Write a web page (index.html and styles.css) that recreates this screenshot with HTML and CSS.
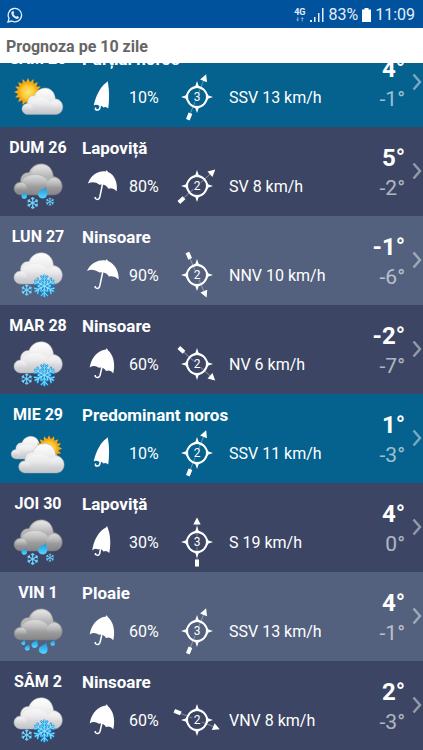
FILE: index.html
```html
<!DOCTYPE html>
<html lang="ro">
<head>
    <meta charset="UTF-8">
    <meta name="viewport" content="width=device-width, initial-scale=1.0">
    <title>Prognoza pe 10 zile</title>
    <link rel="stylesheet" href="styles.css">
</head>
<body>
    <!-- Simboluri folosite in lista -->
    <svg class="simboluri" width="0" height="0" aria-hidden="true">
        <defs>
            <linearGradient id="gri" x1="0" y1="0" x2="0" y2="1">
                <stop offset="0" stop-color="#cfcfcf"/>
                <stop offset="0.6" stop-color="#aaaaab"/>
                <stop offset="1" stop-color="#858587"/>
            </linearGradient>
            <linearGradient id="alb" x1="0" y1="0" x2="0" y2="1">
                <stop offset="0" stop-color="#fbfbfb"/>
                <stop offset="0.6" stop-color="#e6e6e8"/>
                <stop offset="1" stop-color="#c2c3c8"/>
            </linearGradient>
            <linearGradient id="lumina" x1="0" y1="0" x2="0" y2="1">
                <stop offset="0" stop-color="#fff" stop-opacity="0.5"/>
                <stop offset="0.7" stop-color="#fff" stop-opacity="0"/>
            </linearGradient>
            <radialGradient id="galben">
                <stop offset="0" stop-color="#ffe67a"/>
                <stop offset="0.7" stop-color="#fdc52c"/>
                <stop offset="1" stop-color="#f0a010"/>
            </radialGradient>
            <linearGradient id="apa" x1="0" y1="0" x2="0" y2="1">
                <stop offset="0" stop-color="#1596dc"/>
                <stop offset="1" stop-color="#5ad6ff"/>
            </linearGradient>

            <path id="contur" d="M15 34C11 34 8 31 8 27.500C8 24 10.500 21 14.500 21C14 15 18 11 23 11.500C25 6 30 2.700 35.500 2.700C42 2.700 47 8 47.500 15.500C52.500 16 56.300 20 56.300 25C56.300 30.500 52.500 34 48 34Z"/>
            <g id="reflexii" fill="url(#lumina)">
                <ellipse cx="29" cy="22" rx="13" ry="8"/>
                <ellipse cx="35.500" cy="12" rx="10" ry="8"/>
                <ellipse cx="15" cy="27" rx="6" ry="5"/>
                <ellipse cx="48" cy="24" rx="7" ry="7"/>
            </g>
            <g id="nor-gri"><use href="#contur" fill="url(#gri)" stroke="#77777b" stroke-width="0.500"/><use href="#reflexii"/></g>
            <g id="nor-alb"><use href="#contur" fill="url(#alb)" stroke="#aeb0b6" stroke-width="0.500"/><use href="#reflexii"/></g>

            <g id="soare">
                <path fill="#f7a913" d="M0-14L2-9.800L5.400-12.900L5.600-8.300L9.900-9.900L8.300-5.600L12.900-5.400L9.800-2L14 0L9.800 2L12.900 5.400L8.300 5.600L9.900 9.900L5.600 8.300L5.400 12.900L2 9.800L0 14L-2 9.800L-5.400 12.900L-5.600 8.300L-9.900 9.900L-8.300 5.600L-12.900 5.400L-9.800 2L-14 0L-9.800-2L-12.900-5.400L-8.300-5.600L-9.900-9.900L-5.600-8.300L-5.400-12.900L-2-9.800Z"/>
                <circle r="9.800" fill="url(#galben)"/>
            </g>
            <path id="picatura" fill="url(#apa)" d="M3-6C4-2 5 0 4.300 2.500C3.500 5.500-0.500 6.500-3 4.500C-5.500 2.500-5 -1-2.500-2.500C-0.500-3.600 1.500-4.200 3-6Z"/>
            <g id="brat">
                <path d="M0 0V-10.500M-3-9.500L0-6.500L3-9.500M-2.500-5.500L0-3L2.500-5.500"/>
            </g>
            <g id="brat-simplu">
                <path d="M0 0V-10.500M-3-9L0-6L3-9"/>
            </g>
            <g id="fulg" fill="none" stroke-linecap="round">
                <use href="#brat"/>
                <use href="#brat" transform="rotate(60)"/>
                <use href="#brat" transform="rotate(120)"/>
                <use href="#brat" transform="rotate(180)"/>
                <use href="#brat" transform="rotate(240)"/>
                <use href="#brat" transform="rotate(300)"/>
            </g>
            <g id="fulg-mare">
                <use href="#fulg" stroke="#1497dc" stroke-width="2.200"/>
                <use href="#fulg" stroke="#8ddeff" stroke-width="1"/>
            </g>
            <g id="fulg-mic" fill="none" stroke="#6fd3ff" stroke-width="2">
                <use href="#brat-simplu"/>
                <use href="#brat-simplu" transform="rotate(60)"/>
                <use href="#brat-simplu" transform="rotate(120)"/>
                <use href="#brat-simplu" transform="rotate(180)"/>
                <use href="#brat-simplu" transform="rotate(240)"/>
                <use href="#brat-simplu" transform="rotate(300)"/>
            </g>
        </defs>

        <!-- Starea vremii -->
        <symbol id="partial-noros" viewBox="0 0 64 50">
            <use href="#soare" transform="translate(22 20)"/>
            <use href="#nor-alb" transform="translate(9.200 13.700) scale(0.845)"/>
        </symbol>
        <symbol id="predominant-noros" viewBox="0 0 64 50">
            <use href="#nor-alb" transform="translate(-0.600 6.400) scale(0.720)"/>
            <use href="#soare" transform="translate(43 20.500) scale(0.940)"/>
            <use href="#nor-alb" transform="translate(5.200 13) scale(0.940)"/>
        </symbol>
        <symbol id="ninsoare" viewBox="0 0 64 50">
            <use href="#nor-alb"/>
            <use href="#fulg-mic" transform="translate(20.700 40) scale(0.540)"/>
            <use href="#fulg-mare" transform="translate(38.300 36)"/>
        </symbol>
        <symbol id="lapovita" viewBox="0 0 64 50">
            <use href="#nor-gri"/>
            <use href="#picatura" transform="translate(18.300 34.500) scale(0.600)"/>
            <use href="#picatura" transform="translate(36.700 32)"/>
            <use href="#fulg-mic" transform="translate(26.700 42) scale(0.560)"/>
            <use href="#fulg-mic" transform="translate(44 40.700) scale(0.400)"/>
        </symbol>
        <symbol id="ploaie" viewBox="0 0 64 50">
            <use href="#nor-gri"/>
            <use href="#picatura" transform="translate(17.300 36.500) scale(0.450)"/>
            <use href="#picatura" transform="translate(21.300 41.500) scale(0.550)"/>
            <use href="#picatura" transform="translate(28.700 38) scale(0.700)"/>
            <use href="#picatura" transform="translate(37.300 42.500) scale(0.950)"/>
            <use href="#picatura" transform="translate(46.700 37) scale(0.500)"/>
        </symbol>

        <!-- Umbrela, tot mai deschisa -->
        <symbol id="umbrela-10" viewBox="0 0 40 40">
            <path d="M11.700 28.500C14 18 19 9 24.500 5.500L25.300 4L26 6C27.500 14 27.300 23 26.300 31.500Q24 29 21.500 30.500Q19.500 28 17.500 29Q14 27 11.700 28.500Z"/>
            <path class="maner" d="M18.500 28L17.700 31.500Q16 34 13.500 32.500V30.500"/>
        </symbol>
        <symbol id="umbrela-30" viewBox="0 0 40 40">
            <path d="M10.300 28.500C11.500 18 17 9 24 5.500L25 4L25.800 6C28.500 13 29 22 27.300 31Q24.500 28 21.500 29.500Q19 26 16 27.500Q13 25.500 10.300 28.500Z"/>
            <path class="maner" d="M18.500 27L17.700 31.500Q16.500 34.500 13.500 32.500V31"/>
        </symbol>
        <symbol id="umbrela-60" viewBox="0 0 40 40">
            <path d="M7.700 23.500C9.500 12 17 6 24 5.500L24.700 4L25.800 6C31.500 11 33.500 20 31.300 29.300Q28.500 25.500 24 27Q21.500 22.500 17 23.700Q12 20.500 7.700 23.500Z"/>
            <path class="maner" d="M20 23L18 31.500Q16.500 35 13.300 32.500V31"/>
        </symbol>
        <symbol id="umbrela-80" viewBox="0 0 40 40">
            <path d="M6 17.500C9 8.500 17 4.500 24 5.500L24.700 4L26 6C33 9 35.800 17 34.700 25.300Q31 21 26.500 22.700Q23.500 17.500 17.500 18.700Q12 14.500 6 17.500Z"/>
            <path class="maner" d="M20.500 18L17.800 31Q16.500 35 13.300 32.500V31"/>
        </symbol>
        <symbol id="umbrela-90" viewBox="0 0 40 40">
            <path d="M5 16C9 7.500 17 4.500 24 5.500L24.700 4L26 6C33 9 37 16 36.700 24.500Q32 20 27 21.500Q23.500 16.500 17.500 17.500Q11 13 5 16Z"/>
            <path class="maner" d="M20.700 17L17.800 31Q16.500 35 13.300 32.500V31"/>
        </symbol>

        <!-- Busola -->
        <symbol id="roza" viewBox="-25 -25 50 50">
            <circle r="9.800" fill="none" stroke="#fff" stroke-width="2.200"/>
            <path d="M0-16L1.500-11.500L5-9H-5L-1.500-11.500ZM0 16L1.500 11.500L5 9H-5L-1.500 11.500ZM-16 0L-11.500-1.500L-9-5V5L-11.500 1.500ZM16 0L11.500-1.500L9-5V5L11.500 1.500Z"/>
            <circle r="8.800" class="fundal"/>
        </symbol>
        <symbol id="sageata" viewBox="-25 -25 50 50">
            <path d="M0-24.500L3.700-17.500H-3.700ZM-2 17.500H2V24.500H-2Z"/>
            <path d="M0-18V-10M0 10V18M0-9V-5M0 5V9" stroke="#fff" stroke-opacity="0.350"/>
        </symbol>
        <symbol id="inainte" viewBox="0 0 10 18">
            <path d="M1.500 1.500L8 9L1.500 16.500" fill="none" stroke="#fff" stroke-opacity="0.450" stroke-width="2.500"/>
        </symbol>
    </svg>

    <div class="aplicatie">
        <!-- Bara de stare a telefonului -->
        <div class="stare">
            <svg class="whatsapp" width="16" height="16" viewBox="0 0 16 16" role="img" aria-label="WhatsApp">
                <path d="M1 15L2 11.300A6.700 6.700 0 1 1 4.700 14Z" fill="none" stroke="#e4eefa" stroke-width="1.300"/>
                <path d="M5.200 4.200L6.400 4L7.200 6L6.400 7Q7.300 8.900 9.200 9.700L10.200 8.900L12 9.900Q11.700 12 9.700 11.900Q5 10.500 4.300 6.200Q4.300 5 5.200 4.200Z" fill="#e4eefa"/>
            </svg>
            <div class="retea">
                <span>4G</span>
                <svg width="8" height="5" viewBox="0 0 8 5" fill="#7fa7cd">
                    <path d="M0 2.500H1.200V0H2.200V2.500H3.400L1.700 4.500ZM4.600 2L6.300 0L8 2H6.800V4.500H5.800V2Z"/>
                </svg>
            </div>
            <svg class="semnal" width="14" height="14" viewBox="0 0 14 14" fill="#e4eefa">
                <path d="M0 12H2V14H0ZM4 9H5.500V14H4ZM8 5H9.500V14H8ZM12 0H13.500V14H12Z"/>
            </svg>
            <span>83%</span>
            <svg class="baterie" width="9" height="14" viewBox="0 0 9 14" fill="#fff">
                <path d="M2.500 0H6.500V1.500H9V14H0V1.500H2.500Z"/>
            </svg>
            <span>11:09</span>
        </div>

        <h1>Prognoza pe 10 zile</h1>

        <!-- Lista zilelor -->
        <ul class="zile">
            <li>
                <a class="zi weekend" href="#">
                    <div class="data">SÂM 25 <svg class="vreme"><use href="#partial-noros"/></svg></div>
                    <div class="detalii">
                        <h2>Parțial noros</h2>
                        <div class="valori">
                            <svg class="umbrela"><use href="#umbrela-10"/></svg>
                            <span class="procent">10%</span>
                            <svg class="busola" viewBox="-25 -25 50 50"><use href="#roza"/><use class="ssv" href="#sageata"/><text y="4">3</text></svg>
                            <span>SSV 13 km/h</span>
                        </div>
                    </div>
                    <div class="grade"><b>4°</b><span>-1°</span></div>
                    <svg class="inainte"><use href="#inainte"/></svg>
                </a>
            </li>
            <li>
                <a class="zi" href="#">
                    <div class="data">DUM 26 <svg class="vreme"><use href="#lapovita"/></svg></div>
                    <div class="detalii">
                        <h2>Lapoviță</h2>
                        <div class="valori">
                            <svg class="umbrela"><use href="#umbrela-80"/></svg>
                            <span class="procent">80%</span>
                            <svg class="busola" viewBox="-25 -25 50 50"><use href="#roza"/><use class="sv" href="#sageata"/><text y="4">2</text></svg>
                            <span>SV 8 km/h</span>
                        </div>
                    </div>
                    <div class="grade"><b>5°</b><span>-2°</span></div>
                    <svg class="inainte"><use href="#inainte"/></svg>
                </a>
            </li>
            <li>
                <a class="zi deschis" href="#">
                    <div class="data">LUN 27 <svg class="vreme"><use href="#ninsoare"/></svg></div>
                    <div class="detalii">
                        <h2>Ninsoare</h2>
                        <div class="valori">
                            <svg class="umbrela"><use href="#umbrela-90"/></svg>
                            <span class="procent">90%</span>
                            <svg class="busola" viewBox="-25 -25 50 50"><use href="#roza"/><use class="nnv" href="#sageata"/><text y="4">2</text></svg>
                            <span>NNV 10 km/h</span>
                        </div>
                    </div>
                    <div class="grade"><b>-1°</b><span>-6°</span></div>
                    <svg class="inainte"><use href="#inainte"/></svg>
                </a>
            </li>
            <li>
                <a class="zi" href="#">
                    <div class="data">MAR 28 <svg class="vreme"><use href="#ninsoare"/></svg></div>
                    <div class="detalii">
                        <h2>Ninsoare</h2>
                        <div class="valori">
                            <svg class="umbrela"><use href="#umbrela-60"/></svg>
                            <span class="procent">60%</span>
                            <svg class="busola" viewBox="-25 -25 50 50"><use href="#roza"/><use class="nv" href="#sageata"/><text y="4">2</text></svg>
                            <span>NV 6 km/h</span>
                        </div>
                    </div>
                    <div class="grade"><b>-2°</b><span>-7°</span></div>
                    <svg class="inainte"><use href="#inainte"/></svg>
                </a>
            </li>
            <li>
                <a class="zi weekend" href="#">
                    <div class="data">MIE 29 <svg class="vreme"><use href="#predominant-noros"/></svg></div>
                    <div class="detalii">
                        <h2>Predominant noros</h2>
                        <div class="valori">
                            <svg class="umbrela"><use href="#umbrela-10"/></svg>
                            <span class="procent">10%</span>
                            <svg class="busola" viewBox="-25 -25 50 50"><use href="#roza"/><use class="ssv" href="#sageata"/><text y="4">2</text></svg>
                            <span>SSV 11 km/h</span>
                        </div>
                    </div>
                    <div class="grade"><b>1°</b><span>-3°</span></div>
                    <svg class="inainte"><use href="#inainte"/></svg>
                </a>
            </li>
            <li>
                <a class="zi" href="#">
                    <div class="data">JOI 30 <svg class="vreme"><use href="#lapovita"/></svg></div>
                    <div class="detalii">
                        <h2>Lapoviță</h2>
                        <div class="valori">
                            <svg class="umbrela"><use href="#umbrela-30"/></svg>
                            <span class="procent">30%</span>
                            <svg class="busola" viewBox="-25 -25 50 50"><use href="#roza"/><use href="#sageata"/><text y="4">3</text></svg>
                            <span>S 19 km/h</span>
                        </div>
                    </div>
                    <div class="grade"><b>4°</b><span>0°</span></div>
                    <svg class="inainte"><use href="#inainte"/></svg>
                </a>
            </li>
            <li>
                <a class="zi deschis" href="#">
                    <div class="data">VIN 1 <svg class="vreme"><use href="#ploaie"/></svg></div>
                    <div class="detalii">
                        <h2>Ploaie</h2>
                        <div class="valori">
                            <svg class="umbrela"><use href="#umbrela-60"/></svg>
                            <span class="procent">60%</span>
                            <svg class="busola" viewBox="-25 -25 50 50"><use href="#roza"/><use class="ssv" href="#sageata"/><text y="4">3</text></svg>
                            <span>SSV 13 km/h</span>
                        </div>
                    </div>
                    <div class="grade"><b>4°</b><span>-1°</span></div>
                    <svg class="inainte"><use href="#inainte"/></svg>
                </a>
            </li>
            <li>
                <a class="zi" href="#">
                    <div class="data">SÂM 2 <svg class="vreme"><use href="#ninsoare"/></svg></div>
                    <div class="detalii">
                        <h2>Ninsoare</h2>
                        <div class="valori">
                            <svg class="umbrela"><use href="#umbrela-60"/></svg>
                            <span class="procent">60%</span>
                            <svg class="busola" viewBox="-25 -25 50 50"><use href="#roza"/><use class="vnv" href="#sageata"/><text y="4">2</text></svg>
                            <span>VNV 8 km/h</span>
                        </div>
                    </div>
                    <div class="grade"><b>2°</b><span>-3°</span></div>
                    <svg class="inainte"><use href="#inainte"/></svg>
                </a>
            </li>
        </ul>
    </div>
</body>
</html>
```
FILE: styles.css
```css
* {
    box-sizing: border-box;
}

body {
    margin: 0;
    font-family: Roboto, sans-serif;
    font-size: 16px;
    line-height: 20px;
    color: #fff;
    background-color: #3c4664;
}

.simboluri {
    display: block;
}

.aplicatie {
    display: flex;
    flex-direction: column;
    height: 100vh;
    overflow: hidden;
}

/* Bara de stare */
.stare {
    display: flex;
    align-items: center;
    flex-shrink: 0;
    gap: 4px;
    height: 28px;
    padding: 2px 8px 0 7px;
    background-color: #01529c;
    color: #e4eefa;
}

.whatsapp {
    margin-right: auto;
}

.retea {
    display: flex;
    flex-direction: column;
    align-items: center;
    margin-right: 1px;
    font-size: 9px;
    font-weight: bold;
    line-height: 9px;
}

/* Titlul paginii */
h1 {
    flex-shrink: 0;
    margin: 0;
    padding: 9px 6px 6px;
    font-size: 16px;
    line-height: 20px;
    color: #666;
    background-color: #fff;
    z-index: 1;
}

/* Lista este derulata putin, prima zi intra sub titlu */
.zile {
    margin: -25px 0 0;
    padding: 0;
    list-style: none;
}

.zi {
    display: grid;
    grid-template-columns: 76px 1fr auto 18px;
    height: 89px;
    color: #fff;
    text-decoration: none;
    background-color: #3c4664;
    --fundal: #3c4664;
}

.deschis {
    background-color: #53617e;
    --fundal: #53617e;
}

.weekend {
    background-color: #05618e;
    --fundal: #05618e;
}

.fundal {
    fill: var(--fundal);
}

.data {
    display: flex;
    flex-direction: column;
    align-items: center;
    gap: 3px;
    padding-top: 11px;
    font-weight: bold;
}

.vreme {
    width: 64px;
    height: 50px;
}

.detalii {
    padding: 11px 0 0 6px;
}

h2 {
    margin: 0;
    font-size: 17px;
    line-height: 20px;
}

/* Umbrela, procentul, busola si vantul */
.valori {
    display: flex;
    align-items: center;
    gap: 7px;
    margin-top: 3px;
}

.valori span {
    padding-top: 2px;
}

.umbrela {
    width: 40px;
    height: 40px;
    fill: #fff;
}

.maner {
    fill: none;
    stroke: #fff;
    stroke-width: 1.5px;
}

.procent {
    width: 36px;
}

.busola {
    width: 50px;
    height: 50px;
    fill: #fff;
    overflow: visible;
}

.busola use {
    x: -25px;
    y: -25px;
    width: 50px;
    height: 50px;
}

.busola text {
    font-size: 12px;
    text-anchor: middle;
}

.ssv {
    transform: rotate(22deg);
}

.sv {
    transform: rotate(48deg);
}

.vnv {
    transform: rotate(112deg);
}

.nv {
    transform: rotate(132deg);
}

.nnv {
    transform: rotate(157deg);
}

/* Temperaturile */
.grade {
    display: flex;
    flex-direction: column;
    padding-top: 16px;
    text-align: right;
    line-height: 30px;
}

.grade b {
    font-size: 24px;
}

.grade span {
    font-size: 21px;
    opacity: 0.6;
}

.inainte {
    width: 10px;
    height: 18px;
    margin: 35px 0 0 7px;
}
```
